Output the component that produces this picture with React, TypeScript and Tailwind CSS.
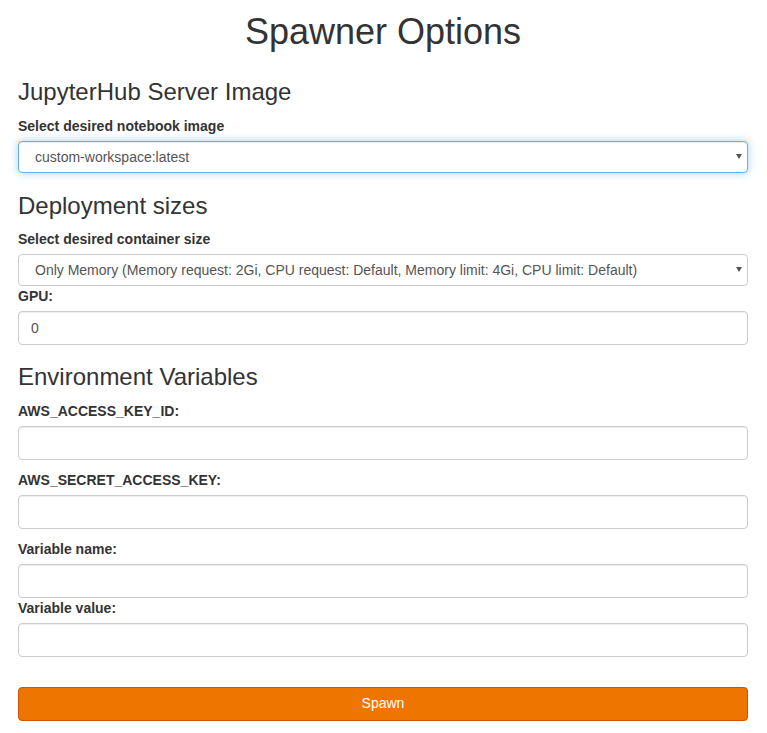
import { ReactNode } from "react";

const Label = ({ children, className = "" }: { children: ReactNode; className?: string }) => (
  <label className={`block text-[14px] leading-[20px] font-bold text-[#333] ${className}`}>
    {children}
  </label>
);

const TextInput = ({ value = "" }: { value?: string }) => (
  <input
    type="text"
    defaultValue={value}
    className="mt-[5px] block w-full h-[34px] rounded-[4px] border border-[#ccc] bg-white px-[12px] text-[14px] text-[#555] shadow-[inset_0_1px_1px_rgba(0,0,0,0.075)] outline-none"
  />
);

const Select = ({ value, focused = false }: { value: string; focused?: boolean }) => (
  <div className="relative mt-[5px]">
    <select
      defaultValue={value}
      className={`block w-full h-[32px] appearance-none rounded-[4px] border bg-white pl-[16px] pr-[20px] text-[14px] text-[#555] outline-none ${
        focused
          ? "border-[#66afe9] shadow-[inset_0_1px_1px_rgba(0,0,0,0.075),0_0_8px_rgba(102,175,233,0.6)]"
          : "border-[#ccc]"
      }`}
    >
      <option>{value}</option>
    </select>
    <svg
      className="pointer-events-none absolute right-[6px] top-[13px]"
      width="6"
      height="5"
      viewBox="0 0 6 5"
    >
      <polygon points="0,0 6,0 3,5" fill="#555" />
    </svg>
  </div>
);

export default function App() {
  return (
    <div
      className="pl-[18px] pr-[19px] text-[14px] text-[#333]"
      style={{ fontFamily: '"Liberation Sans", Arial, sans-serif' }}
    >
      <h1 className="mt-[12px] text-center text-[36px] leading-[39.6px] font-normal">
        Spawner Options
      </h1>

      <h3 className="mt-[27px] text-[24px] leading-[26.4px] font-normal">JupyterHub Server Image</h3>
      <Label className="mt-[11px]">Select desired notebook image</Label>
      <Select value="custom-workspace:latest" focused />

      <h3 className="mt-[20px] text-[24px] leading-[26.4px] font-normal">Deployment sizes</h3>
      <Label className="mt-[10px]">Select desired container size</Label>
      <Select value="Only Memory (Memory request: 2Gi, CPU request: Default, Memory limit: 4Gi, CPU limit: Default)" />
      <Label>GPU:</Label>
      <TextInput value="0" />

      <h3 className="mt-[19px] text-[24px] leading-[26.4px] font-normal">Environment Variables</h3>
      <Label className="mt-[10px]">AWS_ACCESS_KEY_ID:</Label>
      <TextInput />
      <Label className="mt-[10px]">AWS_SECRET_ACCESS_KEY:</Label>
      <TextInput />
      <Label className="mt-[10px]">Variable name:</Label>
      <TextInput />
      <Label>Variable value:</Label>
      <TextInput />

      <button
        type="button"
        className="mt-[30px] block w-full h-[34px] rounded-[4px] border border-[#d35400] bg-[#ee7600] text-[14px] text-white"
      >
        Spawn
      </button>
    </div>
  );
}
